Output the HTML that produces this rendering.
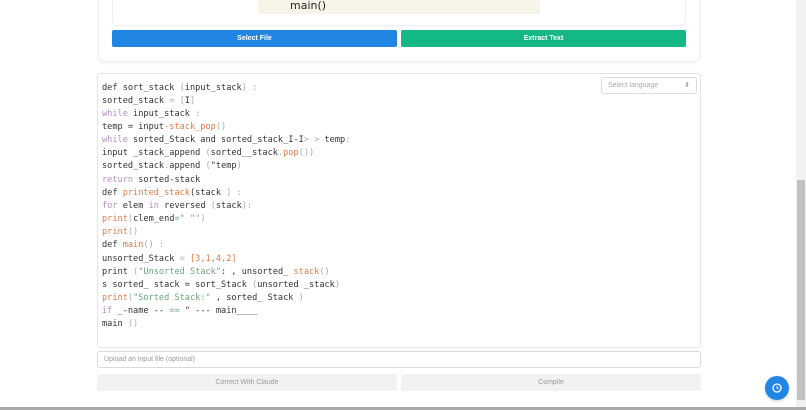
<!DOCTYPE html>
<html><head><style>
*{box-sizing:border-box;margin:0;padding:0}
body{width:806px;height:410px;background:#fff;position:relative;overflow:hidden;font-family:"Liberation Sans",sans-serif}
.abs{position:absolute}
.code{font-family:"DejaVu Sans Mono","Liberation Mono",monospace;font-size:8.6px;color:#333;line-height:13.15px;white-space:pre}
.k{color:#b48ec0}.f{color:#e07b4a}.s{color:#6aa67a}.p{color:#aaa}
.btn{display:flex;align-items:center;justify-content:center;font-size:7px;border-radius:2px}
</style></head><body>
<div class="abs" style="left:98px;top:-10px;width:602px;height:72px;border:1px solid #eceef0;border-radius:6px;box-shadow:0 1px 3px rgba(0,0,0,.06)"></div>
<div class="abs" style="left:112px;top:-10px;width:574px;height:36px;border:1px solid #eceef0;border-radius:6px"></div>
<div class="abs" style="left:258px;top:0;width:282px;height:14px;background:#f7f5e8"></div>
<div class="abs" style="left:290px;top:-1px;font-family:'DejaVu Sans',sans-serif;font-size:11px;color:#222">main()</div>
<div class="abs btn" style="left:112px;top:30px;width:285px;height:17px;background:#2186e3;color:#fff;font-weight:bold">Select File</div>
<div class="abs btn" style="left:401px;top:30px;width:285px;height:17px;background:#13b884;color:#fff;font-weight:bold">Extract Text</div>
<div class="abs" style="left:97px;top:73px;width:604px;height:275px;border:1px solid #e3e5e8;border-radius:3px"></div>
<div class="abs" style="left:601px;top:77px;width:96px;height:17px;border:1px solid #d8dadd;border-radius:3px;font-size:7px;color:#aaa;padding:4px 0 0 6px">Select language<span style="position:absolute;right:6px;top:3px;font-size:7px">⬍</span></div>
<div class="abs code" style="left:102px;top:81.5px">def sort_stack <span class="p">(</span>input_stack<span class="p">) :</span>
sorted_stack <span class="p">= [</span>I<span class="p">]</span>
<span class="k">while</span> input_stack <span class="p">:</span>
temp = input<span class="f">-stack_pop</span><span class="p">()</span>
<span class="k">while</span> sorted_Stack and sorted_stack_I-I<span class="p">&gt; &gt;</span> temp<span class="p">:</span>
input _stack_append <span class="p">(</span>sorted__stack<span class="p">.</span><span class="f">pop</span><span class="p">())</span>
sorted_stack<span class="p">.</span>append <span class="p">(</span>"temp<span class="p">)</span>
<span class="k">return</span> sorted-stack
def <span class="f">printed_stack</span>(stack <span class="p">) :</span>
<span class="k">for</span> elem <span class="k">in</span> reversed <span class="p">(</span>stack<span class="p">):</span>
<span class="f">print</span><span class="p">(</span>clem_end<span class="s">=" "</span><span class="p">")</span>
<span class="f">print</span><span class="p">()</span>
def <span class="f">main</span><span class="p">() :</span>
unsorted_Stack <span class="p">=</span> <span class="f">[3,1,4,2]</span>
print <span class="p">(</span><span class="s">"Unsorted Stack"</span>: , unsorted_ <span class="f">stack</span><span class="p">()</span>
s sorted_ stack = sort_Stack <span class="p">(</span>unsorted _stack<span class="p">)</span>
<span class="f">print</span><span class="p">(</span><span class="s">"Sorted Stack:"</span> , sorted_ Stack <span class="p">)</span>
<span class="k">if</span> _-name -- <span class="s">==</span> " --- main____
main <span class="p">()</span></div>
<div class="abs" style="left:97px;top:351px;width:604px;height:17px;border:1px solid #d8dadd;border-radius:3px;font-size:7px;color:#999;padding:4px 0 0 6px">Upload an input file (optional)</div>
<div class="abs btn" style="left:97px;top:374px;width:300px;height:17px;background:#f1f2f4;color:#999">Correct With Claude</div>
<div class="abs btn" style="left:401px;top:374px;width:300px;height:17px;background:#f1f2f4;color:#999">Compile</div>
<div class="abs" style="left:765px;top:376px;width:24px;height:24px;border-radius:50%;background:#2186e3;box-shadow:0 1px 3px rgba(0,0,0,.2)">
<svg width="24" height="24" viewBox="0 0 24 24"><circle cx="12" cy="12" r="4" fill="none" stroke="#fff" stroke-width="1.3"/><path d="M12 10v2l1.5 1" stroke="#fff" stroke-width="1" fill="none"/></svg></div>
<div class="abs" style="left:796px;top:0;width:10px;height:407px;background:#f1f1f1"></div>
<div class="abs" style="left:797px;top:180px;width:8px;height:220px;background:#c1c1c1"></div>
<div class="abs" style="left:0;top:407px;width:806px;height:3px;background:#a9a9a9"></div>
</body></html>
